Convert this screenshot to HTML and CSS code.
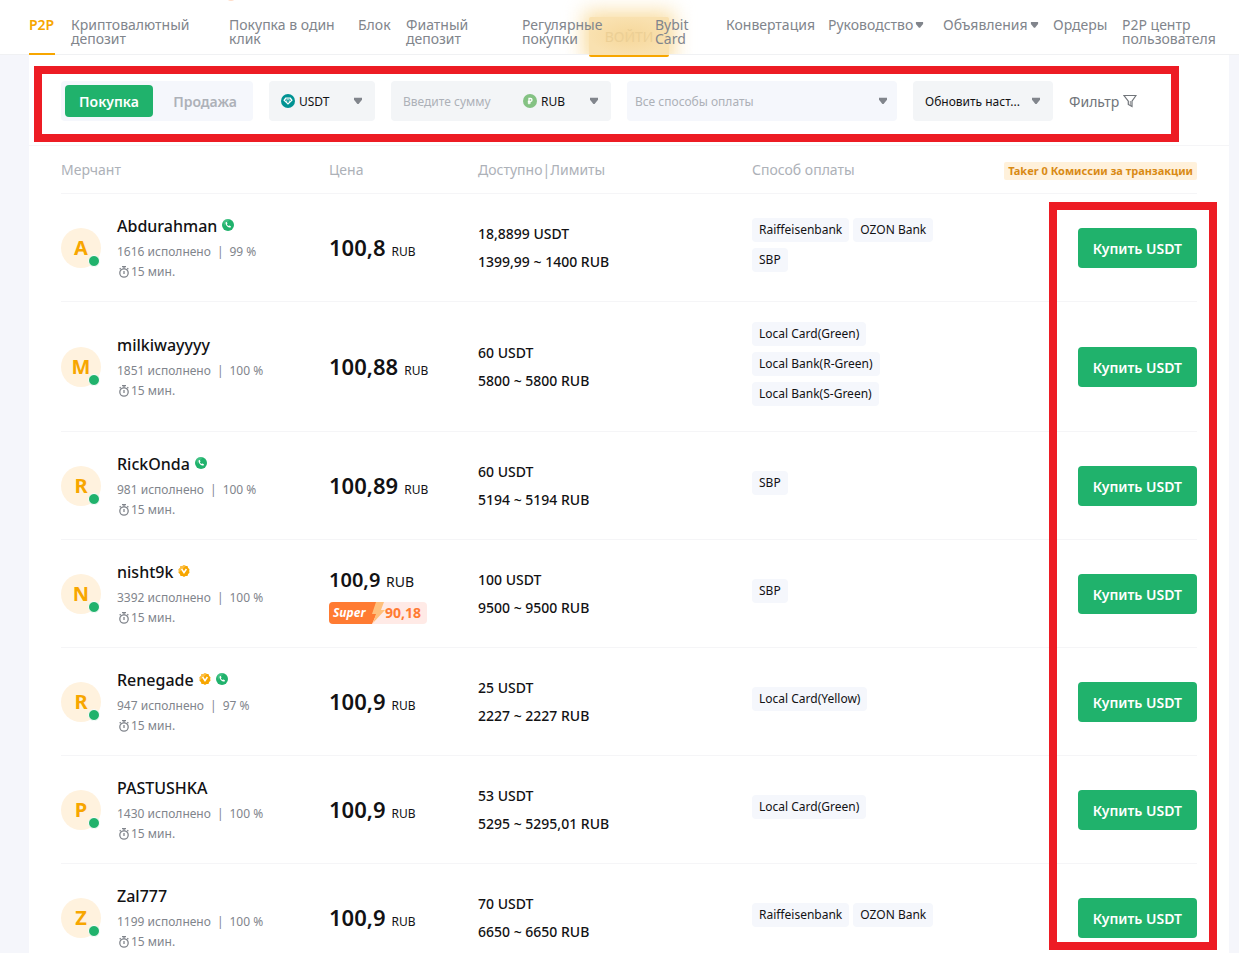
FILE: index.html
```html
<!DOCTYPE html>
<html lang="ru">
<head>
<meta charset="utf-8">
<meta name="viewport" content="width=device-width, initial-scale=1">
<title>P2P</title>
<link rel="stylesheet" href="styles.css">
</head>
<body>
<svg class="sprite" aria-hidden="true">
  <symbol id="arrow" viewBox="0 0 10 8"><path d="M1 .8h8v2L5.6 7H4.4L1 2.8z" fill="currentColor"/></symbol>
  <symbol id="clock" viewBox="0 0 12 12"><g fill="none" stroke="currentColor" stroke-width="1.300"><circle cx="6" cy="7" r="4.2"/><path d="M4 .7h4M6 .7v2M6 5v3M9.3 2.2l1 1M2.7 2.2l-1 1"/></g></symbol>
  <symbol id="phone" viewBox="0 0 12 12"><circle cx="6" cy="6" r="6" fill="#20b26c"/><path d="M1.2 2.4A6 6 0 0 1 8 .3L2 7z" fill="#5fd09a" opacity=".5"/><path d="M3.7 3.2c-.6 2.8 2 5.7 5 5.2l.2-1.2-1.5-.8-.8.7C5.7 6.700 5.100 6 4.800 5.200l.7-.7-.7-1.500z" fill="#fff"/></symbol>
  <symbol id="medal" viewBox="0 0 12 12"><path d="M6 0l1.600 1 1.900.1.600 1.800L11.500 4.200 11.200 6l.3 1.800-1.400 1.300-.6 1.800-1.900.1L6 12l-1.600-1-1.900-.1-.6-1.800L.5 7.800.8 6 .5 4.200l1.400-1.300.6-1.800L4.400 1z" fill="#f7a600"/><path d="M6 0L4.400 1l-1.900.1-.6 1.800L.5 4.200.8 6l-.3 1.800L8 .8z" fill="#ffc95c" opacity=".7"/><path d="M3.600 4l2.400 3.600L8.400 4" fill="none" stroke="#fff" stroke-width="1.500"/></symbol>
</svg>

<header class="topbar">
  <div class="glow-clip" aria-hidden="true"><span class="glow"></span><span class="spark"></span></div>
  <button class="login" type="button">ВОЙТИ</button>
  <nav class="nav">
    <a class="active" href="#">P2P</a>
    <a href="#">Криптовалютный депозит</a>
    <a href="#">Покупка в один клик</a>
    <a href="#">Блок</a>
    <a href="#">Фиатный депозит</a>
    <a href="#">Регулярные покупки</a>
    <a href="#">Bybit Card</a>
    <a href="#">Конвертация</a>
    <a class="menu" href="#">Руководство<svg class="arrow"><use href="#arrow"/></svg></a>
    <a class="menu" href="#">Объявления<svg class="arrow"><use href="#arrow"/></svg></a>
    <a href="#">Ордеры</a>
    <a href="#">P2P центр пользователя</a>
  </nav>
</header>

<main class="panel">
  <form class="filters">
    <div class="side">
      <button class="on" type="button">Покупка</button>
      <button type="button">Продажа</button>
    </div>
    <label class="field coin">
      <svg class="coin-icon" viewBox="0 0 14 14"><circle cx="7" cy="7" r="7" fill="#009393"/><path d="M4.400 3.600h5.200L11.700 6.300 7 10.800 2.300 6.300z" fill="#fff"/><path d="M5 5h4v1H7.500v2.500h-1V6H5zM4 6.300c1 1 5 1 6 0" fill="none" stroke="#009393" stroke-width=".7"/></svg>
      <select aria-label="Монета"><option>USDT</option></select>
      <svg class="arrow"><use href="#arrow"/></svg>
    </label>
    <div class="field amount">
      <input type="text" placeholder="Введите сумму" aria-label="Сумма">
      <label class="currency">
        <svg class="coin-icon" viewBox="0 0 14 14"><circle cx="7" cy="7" r="7" fill="#84c283"/><path d="M6 10.300V4.500h1.600a1.400 1.400 0 0 1 0 2.800H4.800M4.800 8.900h3" fill="none" stroke="#fff" stroke-width="1.300"/></svg>
        <select aria-label="Валюта"><option>RUB</option></select>
        <svg class="arrow"><use href="#arrow"/></svg>
      </label>
    </div>
    <label class="field methods">
      <select aria-label="Способ оплаты"><option>Все способы оплаты</option></select>
      <svg class="arrow"><use href="#arrow"/></svg>
    </label>
    <label class="field refresh">
      <select aria-label="Обновление"><option>Обновить наст...</option></select>
      <svg class="arrow"><use href="#arrow"/></svg>
    </label>
    <button class="more" type="button">Фильтр<svg viewBox="0 0 14 14"><path d="M1 1.500h12L9 7.200v5.300L5.300 10.500V7.200z" fill="none" stroke="currentColor" stroke-width="1.200"/><path d="M7.300 7v4" stroke="currentColor" stroke-width=".8"/></svg></button>
    <span class="mark mark-filters"></span>
  </form>

  <section class="offers">
    <table>
      <colgroup><col class="c-merchant"><col class="c-price"><col class="c-limits"><col class="c-methods"><col class="c-action"></colgroup>
      <thead>
        <tr><th>Мерчант</th><th>Цена</th><th>Доступно|Лимиты</th><th>Способ оплаты</th><th class="right"><span class="fee">Taker 0 Комиссии за транзакции</span></th></tr>
      </thead>
      <tbody>
        <tr>
          <td><div class="merchant"><span class="avatar">A</span><div><div class="name">Abdurahman<svg><use href="#phone"/></svg></div><div class="stats"><span>1616 исполнено</span><span>99 %</span></div><div class="time"><svg><use href="#clock"/></svg>15 мин.</div></div></div></td>
          <td><div class="price"><b>100,8</b> RUB</div></td>
          <td><div class="limits">18,8899 USDT<br>1399,99 ~ 1400 RUB</div></td>
          <td><ul class="tags"><li>Raiffeisenbank</li><li>OZON Bank</li><li>SBP</li></ul></td>
          <td class="right"><button class="buy" type="button">Купить USDT</button></td>
        </tr>
        <tr>
          <td><div class="merchant"><span class="avatar">M</span><div><div class="name">milkiwayyyy</div><div class="stats"><span>1851 исполнено</span><span>100 %</span></div><div class="time"><svg><use href="#clock"/></svg>15 мин.</div></div></div></td>
          <td><div class="price"><b>100,88</b> RUB</div></td>
          <td><div class="limits">60 USDT<br>5800 ~ 5800 RUB</div></td>
          <td><ul class="tags"><li>Local Card(Green)</li><li>Local Bank(R-Green)</li><li>Local Bank(S-Green)</li></ul></td>
          <td class="right"><button class="buy" type="button">Купить USDT</button></td>
        </tr>
        <tr>
          <td><div class="merchant"><span class="avatar">R</span><div><div class="name">RickOnda<svg><use href="#phone"/></svg></div><div class="stats"><span>981 исполнено</span><span>100 %</span></div><div class="time"><svg><use href="#clock"/></svg>15 мин.</div></div></div></td>
          <td><div class="price"><b>100,89</b> RUB</div></td>
          <td><div class="limits">60 USDT<br>5194 ~ 5194 RUB</div></td>
          <td><ul class="tags"><li>SBP</li></ul></td>
          <td class="right"><button class="buy" type="button">Купить USDT</button></td>
        </tr>
        <tr>
          <td><div class="merchant"><span class="avatar">N</span><div><div class="name">nisht9k<svg><use href="#medal"/></svg></div><div class="stats"><span>3392 исполнено</span><span>100 %</span></div><div class="time"><svg><use href="#clock"/></svg>15 мин.</div></div></div></td>
          <td><div class="price with-super"><b>100,9</b> RUB</div><div class="super"><em>Super</em><svg viewBox="0 0 14 22"><path d="M0 0h11L1 22H0z" fill="#ff7b32"/><path d="M5 0h8L10 8h4L2 21l3-9H1z" fill="#ffc07c"/></svg><strong>90,18</strong></div></td>
          <td><div class="limits">100 USDT<br>9500 ~ 9500 RUB</div></td>
          <td><ul class="tags"><li>SBP</li></ul></td>
          <td class="right"><button class="buy" type="button">Купить USDT</button></td>
        </tr>
        <tr>
          <td><div class="merchant"><span class="avatar">R</span><div><div class="name">Renegade<svg><use href="#medal"/></svg><svg><use href="#phone"/></svg></div><div class="stats"><span>947 исполнено</span><span>97 %</span></div><div class="time"><svg><use href="#clock"/></svg>15 мин.</div></div></div></td>
          <td><div class="price"><b>100,9</b> RUB</div></td>
          <td><div class="limits">25 USDT<br>2227 ~ 2227 RUB</div></td>
          <td><ul class="tags"><li>Local Card(Yellow)</li></ul></td>
          <td class="right"><button class="buy" type="button">Купить USDT</button></td>
        </tr>
        <tr>
          <td><div class="merchant"><span class="avatar">P</span><div><div class="name">PASTUSHKA</div><div class="stats"><span>1430 исполнено</span><span>100 %</span></div><div class="time"><svg><use href="#clock"/></svg>15 мин.</div></div></div></td>
          <td><div class="price"><b>100,9</b> RUB</div></td>
          <td><div class="limits">53 USDT<br>5295 ~ 5295,01 RUB</div></td>
          <td><ul class="tags"><li>Local Card(Green)</li></ul></td>
          <td class="right"><button class="buy" type="button">Купить USDT</button></td>
        </tr>
        <tr>
          <td><div class="merchant"><span class="avatar">Z</span><div><div class="name">Zal777</div><div class="stats"><span>1199 исполнено</span><span>100 %</span></div><div class="time"><svg><use href="#clock"/></svg>15 мин.</div></div></div></td>
          <td><div class="price"><b>100,9</b> RUB</div></td>
          <td><div class="limits">70 USDT<br>6650 ~ 6650 RUB</div></td>
          <td><ul class="tags"><li>Raiffeisenbank</li><li>OZON Bank</li></ul></td>
          <td class="right"><button class="buy" type="button">Купить USDT</button></td>
        </tr>
      </tbody>
    </table>
    <span class="mark mark-buy"></span>
  </section>
</main>
</body>
</html>
```
FILE: styles.css
```css
* { box-sizing: border-box; }
body {
  margin: 0;
  height: 100vh;
  overflow: hidden;
  background: #f5f6fb;
  color: #121214;
  font-family: "Noto Sans", "Open Sans", sans-serif;
  font-size: 14px;
}
button, select, input { font: inherit; color: inherit; border: 0; padding: 0; margin: 0; background: none; }
.sprite { display: none; }
.arrow { width: 10px; height: 8px; flex: none; color: #81858c; }

.topbar {
  position: relative;
  z-index: 1;
  height: 55px;
  padding: 0 23px 0 29px;
  background: #fff;
  border-bottom: 1px solid #f0f1f3;
}
.nav {
  position: relative;
  display: grid;
  grid-template-columns:
    minmax(0, 26fr) minmax(0, 142fr) minmax(0, 113fr) minmax(0, 32fr)
    minmax(0, 100fr) minmax(0, 117fr) minmax(0, 55fr) minmax(0, 86fr)
    minmax(0, 99fr) minmax(0, 94fr) minmax(0, 53fr) minmax(0, 94fr);
  column-gap: 16px;
  height: 55px;
}
.nav a { padding-top: 18px; color: #81858c; line-height: 14px; text-decoration: none; }
.nav .active { color: #f7a600; font-weight: 600; border-bottom: 2px solid #f7a600; }
.nav .menu { display: flex; gap: 2px; white-space: nowrap; }
.nav .menu .arrow { width: 9px; margin-top: 3px; }
.glow-clip { position: absolute; inset: 0; overflow: hidden; }
.glow {
  position: absolute;
  left: 584px;
  top: 12px;
  width: 90px;
  height: 50px;
  background: #f9dc9e;
  filter: blur(10px);
}
.spark { position: absolute; left: 226px; top: -8px; width: 10px; height: 9px; border-radius: 50%; background: #ffdcc8; }
.login {
  position: absolute;
  left: 589px;
  top: 17px;
  width: 80px;
  height: 40px;
  border-bottom: 2px solid #f7a600;
  border-radius: 2px;
  background: radial-gradient(closest-side, #f6d79a, #f9e1b0 100%);
  color: #eccf95;
}

.panel { margin: 0 10px 0 29px; background: #fff; }
.filters {
  position: relative;
  display: flex;
  gap: 16px;
  padding: 26px 88px 24px 32px;
  border-bottom: 1px solid #f5f5f7;
}
.side { display: flex; gap: 8px; flex: 0 1 192px; padding: 4px; border-radius: 4px; background: #f5f7fc; }
.side button { flex: 1 1 88px; height: 32px; border-radius: 4px; color: #adb1b8; font-weight: 600; }
.side .on { flex: 0 0 88px; background: #20b26c; color: #fff; }
.field { display: flex; align-items: center; height: 40px; padding: 0 12px; border-radius: 4px; background: #f3f5f7; font-size: 12px; }
select { appearance: none; flex: 1; min-width: 0; outline: 0; }
.coin { flex: 0 0 106px; }
.coin-icon { width: 14px; height: 14px; margin-right: 4px; flex: none; }
.amount { flex: 0 0 220px; }
.amount input { width: 120px; min-width: 0; outline: 0; }
.amount input::placeholder { color: #adb1b8; opacity: 1; }
.currency { display: flex; align-items: center; flex: 1; min-width: 0; }
.methods { flex: 0 1 270px; padding: 0 9px 0 8px; background: #f5f7fc; color: #adb1b8; }
.refresh { flex: 0 0 140px; }
.more { display: flex; align-items: center; gap: 4px; color: #71757a; }
.more svg { width: 14px; height: 14px; }

.mark { position: absolute; border: 8px solid #ed1c24; pointer-events: none; }
.mark-filters { left: 5px; right: 50px; top: 11px; bottom: 3px; }
.mark-buy { right: 12px; width: 168px; top: 56px; bottom: 22px; }

.offers { position: relative; padding: 0 32px; }
table { width: 100%; table-layout: fixed; border-collapse: separate; border-spacing: 0; }
.c-merchant { width: 268px; }
.c-price { width: 149px; }
.c-limits { width: 274px; }
.c-action { width: 216px; }
th { height: 48px; padding: 0; border-bottom: 1px solid #f5f5f7; color: #adb1b8; font-weight: 400; text-align: left; line-height: 20px; white-space: nowrap; }
td { padding: 20px 0 19px; border-bottom: 1px solid #f5f5f7; vertical-align: middle; }
.right { text-align: right; }
.fee { display: inline-block; padding: 0 4px; border-radius: 2px; background: #fff1db; color: #d98a14; font-size: 11px; font-weight: 700; line-height: 18px; vertical-align: middle; }

.merchant { display: flex; align-items: center; gap: 16px; }
.avatar {
  position: relative;
  width: 40px;
  height: 40px;
  flex: none;
  border-radius: 50%;
  background: #fff2de;
  color: #f7a600;
  font-size: 20px;
  font-weight: 700;
  line-height: 40px;
  text-align: center;
}
.avatar::after { content: ""; position: absolute; right: 1px; bottom: 1px; width: 10px; height: 10px; border: 1px solid #fff; border-radius: 50%; background: #20b26c; }
.name { display: flex; align-items: center; gap: 5px; margin-bottom: 4px; font-size: 16px; font-weight: 500; line-height: 24px; }
.name svg { width: 12px; height: 12px; margin-bottom: 2px; }
.stats { display: flex; color: #81858c; font-size: 12px; line-height: 20px; }
.stats span + span::before { content: "|"; margin: 0 6px; }
.time { display: flex; align-items: center; padding-left: 1px; color: #81858c; font-size: 12px; line-height: 20px; }
.time svg { width: 12px; height: 12px; margin-right: 1px; }
.price { padding-top: 2px; font-size: 12px; line-height: 28px; }
.price b { margin-right: 3px; font-size: 22px; font-weight: 600; }
.with-super { margin-bottom: 7px; font-size: 14px; line-height: 26px; }
.with-super b { margin-right: 2px; font-size: 20px; }
.super { display: flex; width: 98px; height: 22px; border-radius: 4px; overflow: hidden; background: #ffeae6; line-height: 22px; }
.super em { width: 42px; padding-left: 4px; background: #ff7b32; color: #fff; font-size: 12px; font-weight: 700; }
.super svg { width: 14px; height: 22px; }
.super strong { color: #ff7b32; font-weight: 700; }
.limits { font-weight: 500; line-height: 28px; }
.tags { display: flex; flex-wrap: wrap; gap: 0 4px; max-width: 200px; margin: 0; padding: 0; list-style: none; }
.tags li { margin-bottom: 6px; padding: 0 7px; border-radius: 4px; background: #f5f7fc; font-size: 12px; line-height: 24px; }
.buy { height: 40px; padding: 0 15px; border-radius: 4px; background: #20b26c; color: #fff; font-weight: 600; vertical-align: middle; }
```
